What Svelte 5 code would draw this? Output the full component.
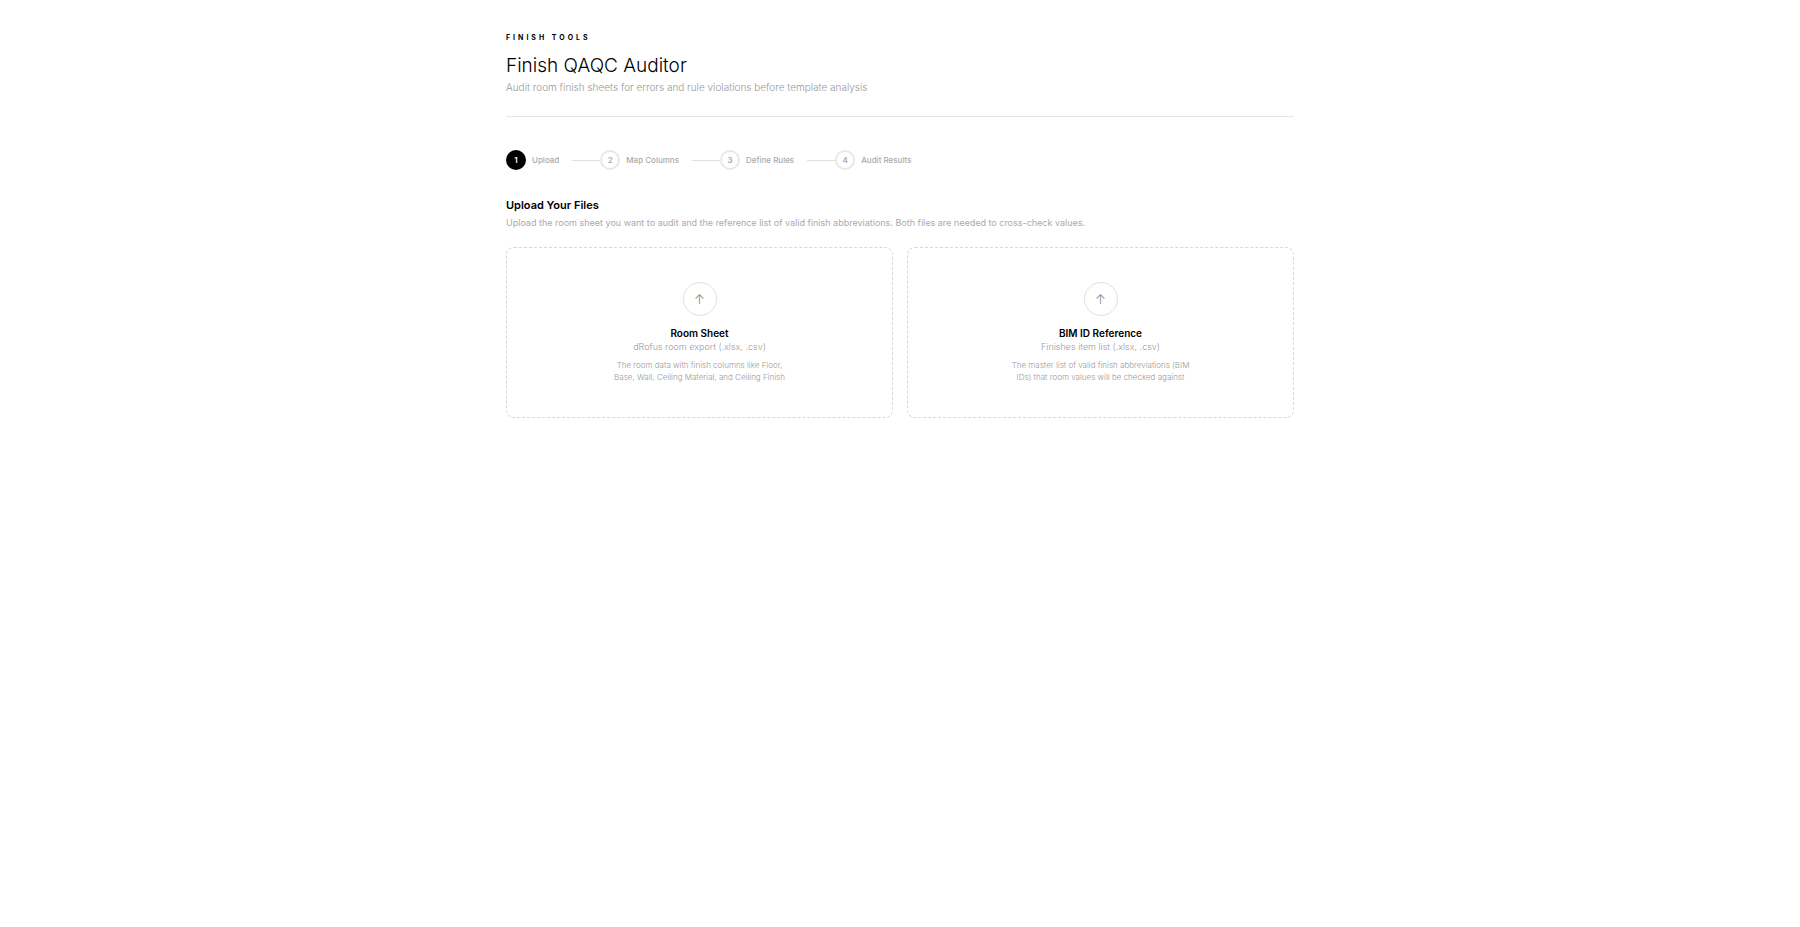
<script>
	const steps = ['Upload', 'Map Columns', 'Define Rules', 'Audit Results'];
	let current = $state(0);

	const uploads = [
		{
			id: 'rooms',
			title: 'Room Sheet',
			formats: 'dRofus room export (.xlsx, .csv)',
			hint: 'The room data with finish columns like Floor, Base, Wall, Ceiling Material, and Ceiling Finish'
		},
		{
			id: 'bim',
			title: 'BIM ID Reference',
			formats: 'Finishes item list (.xlsx, .csv)',
			hint: 'The master list of valid finish abbreviations (BIM IDs) that room values will be checked against'
		}
	];
</script>

<svelte:head>
	<title>Finish QAQC Auditor</title>
</svelte:head>

<div class="page">
	<header>
		<p class="eyebrow">Finish Tools</p>
		<h1>Finish QAQC Auditor</h1>
		<p class="subtitle">Audit room finish sheets for errors and rule violations before template analysis</p>
	</header>

	<ol class="steps">
		{#each steps as step, i}
			<li class:active={i === current}>
				<span class="num">{i + 1}</span>
				<span>{step}</span>
			</li>
		{/each}
	</ol>

	<main>
		<h2>Upload Your Files</h2>
		<p class="intro">Upload the room sheet you want to audit and the reference list of valid finish abbreviations. Both files are needed to cross-check values.</p>

		<div class="uploads">
			{#each uploads as u}
				<label class="drop" for={u.id}>
					<input id={u.id} type="file" accept=".xlsx,.csv" />
					<span class="icon">↑</span>
					<span class="title">{u.title}</span>
					<span class="formats">{u.formats}</span>
					<span class="hint">{u.hint}</span>
				</label>
			{/each}
		</div>
	</main>
</div>

<style>
	:global(body) {
		margin: 0;
		background: #fff;
		color: #000;
		font-family: Inter, sans-serif;
	}

	.page {
		box-sizing: border-box;
		max-width: 852px;
		margin: 0 auto;
		padding: 32px;
	}

	h1, h2, p, ol {
		margin: 0;
		padding: 0;
	}

	header {
		padding-bottom: 21px;
		border-bottom: 1px solid #e5e5e5;
		margin-bottom: 33px;
	}

	.eyebrow {
		margin-bottom: 8px;
		font-size: 7px;
		line-height: 12px;
		font-weight: 700;
		letter-spacing: 3px;
		text-transform: uppercase;
	}

	h1 {
		font-size: 19px;
		line-height: 27px;
		font-weight: 300;
	}

	.subtitle {
		font-size: 10px;
		line-height: 16px;
		font-weight: 300;
		color: #999;
	}

	.steps {
		display: flex;
		margin-bottom: 26px;
		list-style: none;
	}

	.steps li {
		display: flex;
		align-items: center;
		font-size: 8px;
		font-weight: 500;
		color: #aaa;
	}

	/* connector to the previous step */
	.steps li + li::before {
		content: '';
		width: 28px;
		height: 1px;
		margin-left: 13px;
		background: #e0e0e0;
	}

	.num {
		display: grid;
		place-items: center;
		box-sizing: border-box;
		width: 20px;
		height: 20px;
		margin-right: 6px;
		border: 2px solid #e8e8e8;
		border-radius: 50%;
		font-weight: 600;
	}

	.active .num {
		border-color: #000;
		background: #000;
		color: #fff;
	}

	h2 {
		font-size: 11px;
		line-height: 19px;
		font-weight: 600;
	}

	.intro {
		margin-bottom: 16px;
		font-size: 9px;
		line-height: 16px;
		color: #aaa;
	}

	.uploads {
		display: grid;
		grid-template-columns: 1fr 1fr;
		gap: 14px;
	}

	.drop {
		display: flex;
		flex-direction: column;
		align-items: center;
		padding: 34px;
		border: 1px dashed #d8d8d8;
		border-radius: 8px;
		text-align: center;
		cursor: pointer;
	}

	.drop input {
		display: none;
	}

	.icon {
		display: grid;
		place-items: center;
		box-sizing: border-box;
		width: 34px;
		height: 34px;
		margin-bottom: 10px;
		border: 1px solid #e0e0e0;
		border-radius: 50%;
		font-size: 13px;
		font-weight: 300;
		color: #888;
	}

	.title {
		font-size: 10px;
		line-height: 14px;
		font-weight: 600;
	}

	.formats {
		margin-bottom: 5px;
		font-size: 9px;
		line-height: 14px;
		font-weight: 300;
		color: #999;
	}

	.hint {
		max-width: 184px;
		font-size: 8px;
		line-height: 12px;
		font-weight: 300;
		color: #999;
	}
</style>
